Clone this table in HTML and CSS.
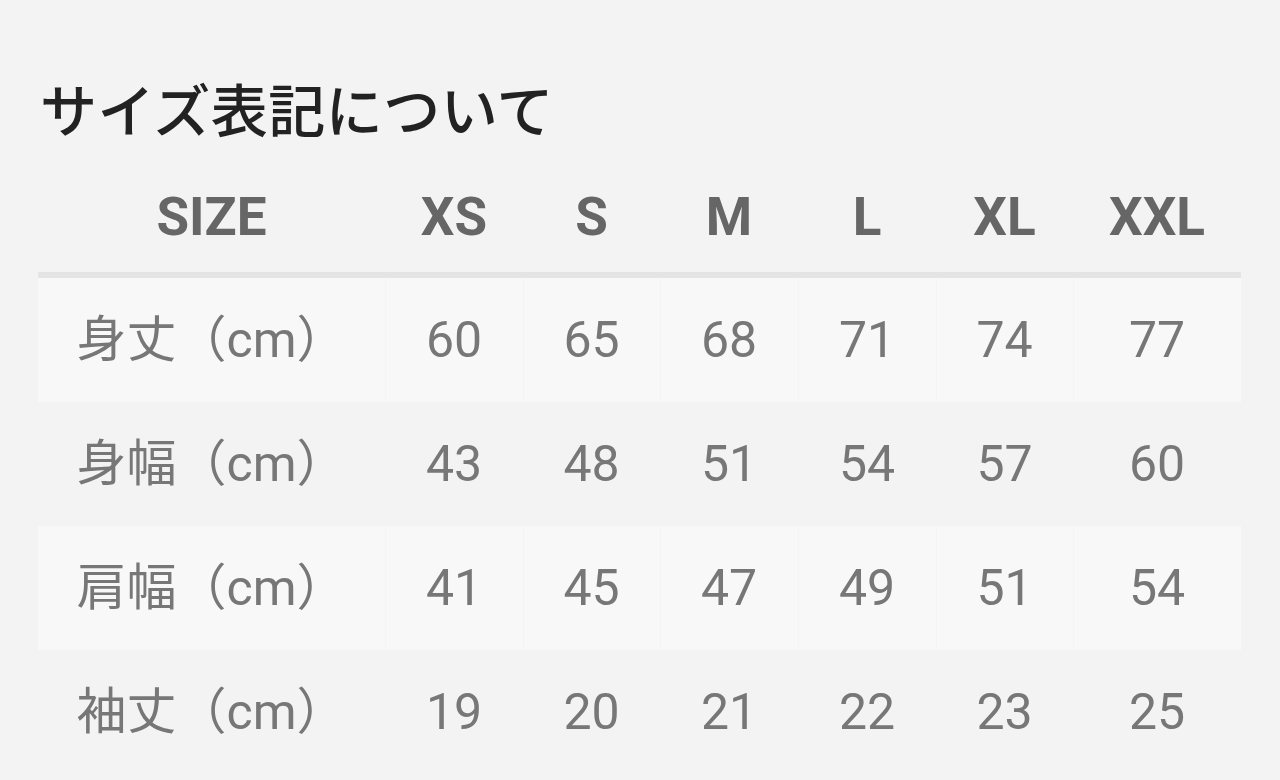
FILE: index.html
```html
<!DOCTYPE html>
<html lang="ja">
<head>
<meta charset="utf-8">
<title>サイズ表記について</title>
<link rel="stylesheet" href="styles.css">
</head>
<body>
<main class="page">
  <h1 class="title">サイズ表記について</h1>
  <div class="table">
    <div class="row head">
      <div class="cell">SIZE</div>
      <div class="cell">XS</div>
      <div class="cell">S</div>
      <div class="cell">M</div>
      <div class="cell">L</div>
      <div class="cell">XL</div>
      <div class="cell">XXL</div>
    </div>
    <div class="row light">
      <div class="cell label">身丈（cm）</div>
      <div class="cell">60</div>
      <div class="cell">65</div>
      <div class="cell">68</div>
      <div class="cell">71</div>
      <div class="cell">74</div>
      <div class="cell">77</div>
    </div>
    <div class="row">
      <div class="cell label">身幅（cm）</div>
      <div class="cell">43</div>
      <div class="cell">48</div>
      <div class="cell">51</div>
      <div class="cell">54</div>
      <div class="cell">57</div>
      <div class="cell">60</div>
    </div>
    <div class="row light">
      <div class="cell label">肩幅（cm）</div>
      <div class="cell">41</div>
      <div class="cell">45</div>
      <div class="cell">47</div>
      <div class="cell">49</div>
      <div class="cell">51</div>
      <div class="cell">54</div>
    </div>
    <div class="row">
      <div class="cell label">袖丈（cm）</div>
      <div class="cell">19</div>
      <div class="cell">20</div>
      <div class="cell">21</div>
      <div class="cell">22</div>
      <div class="cell">23</div>
      <div class="cell">25</div>
    </div>
  </div>
</main>
</body>
</html>
```
FILE: styles.css
```css
html, body {
  margin: 0;
  padding: 0;
  background: #f3f3f3;
}
body {
  font-family: Roboto, "Noto Sans CJK JP", sans-serif;
  width: 1280px;
  height: 780px;
  overflow: hidden;
}
.page {
  padding: 76px 39px 0 38px;
}
.title {
  margin: 0 0 0 2px;
  font-family: "Noto Sans CJK JP", sans-serif;
  font-size: 57px;
  line-height: 62px;
  font-weight: 500;
  color: #222;
  letter-spacing: 0.5px;
}
.table {
  margin-top: 22px;
  display: flex;
  flex-direction: column;
}
.row {
  display: grid;
  grid-template-columns: 347px 138px 137px 138px 138px 137px 168px;
  height: 124px;
  align-items: center;
}
.row.light {
  background: #f8f8f8;
}
.row.head {
  border-bottom: 6px solid #e4e4e4;
  box-sizing: border-box;
  height: 118px;
}
.cell {
  text-align: center;
  font-size: 50px;
  color: #777;
  line-height: 1;
}
.row.light .cell + .cell {
  box-shadow: inset 1px 0 0 #f4f4f4;
  align-self: stretch;
  display: flex;
  align-items: center;
  justify-content: center;
}
.head .cell {
  font-weight: 700;
  font-size: 53px;
  color: #666;
  padding-top: 2px;
}
.label {
  font-family: Roboto, "Noto Sans CJK JP", sans-serif;
  font-size: 50px;
}
```
